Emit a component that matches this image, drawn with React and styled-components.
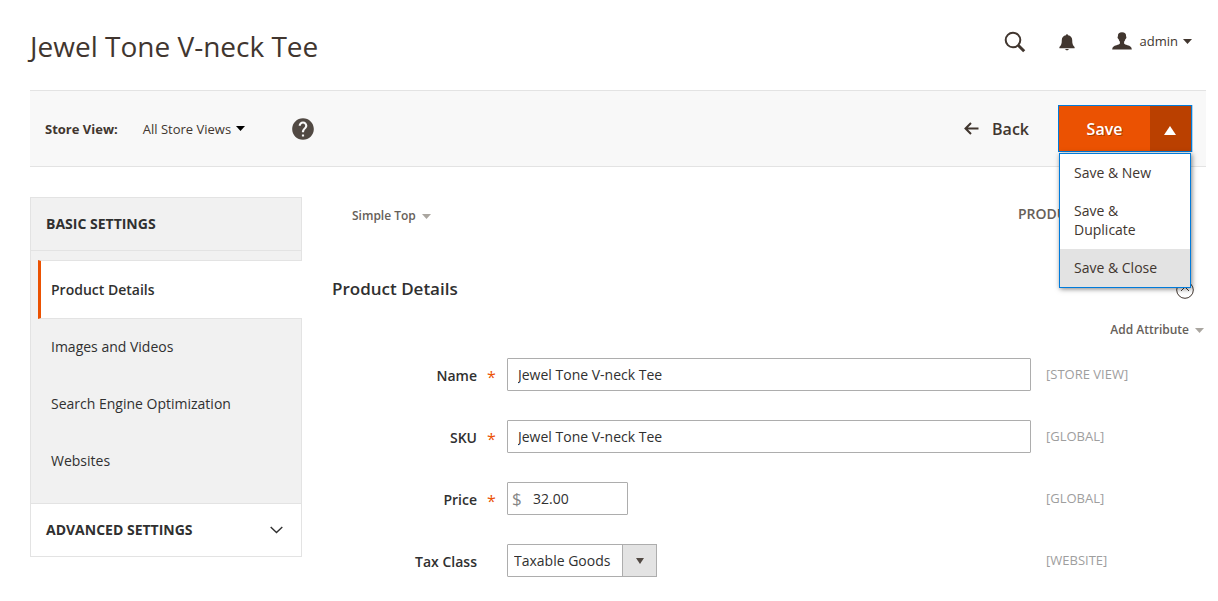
import React, { useState } from "react";
import styled, { createGlobalStyle, css } from "styled-components";
import { MdHelp } from "react-icons/md";

const GlobalStyle = createGlobalStyle`
  *, *::before, *::after { box-sizing: border-box; }
  body {
    margin: 0;
    background: #fff;
    color: #303030;
    font: 400 14px/20px "Open Sans", "Noto Sans", sans-serif;
  }
  button, input, select { font: inherit; color: inherit; }
  h1, h2, p, ul { margin: 0; padding: 0; }
  ul { list-style: none; }
`;

const Page = styled.div`
  padding: 0 12px 24px 30px;
`;

const Header = styled.header`
  display: flex;
  justify-content: space-between;
  align-items: flex-start;
  padding: 29px 14px 27px 0;
`;

const PageTitle = styled.h1`
  color: #41362f;
  font-size: 28px;
  line-height: 34px;
  font-weight: 400;
`;

const HeaderTools = styled.div`
  display: flex;
  align-items: center;
  height: 26px;
  color: #41362f;
`;

const PlainButton = styled.button`
  display: inline-flex;
  align-items: center;
  padding: 0;
  border: 0;
  background: none;
  cursor: pointer;
`;

const SearchButton = styled(PlainButton)`
  margin-right: 33px;
`;

const BellButton = styled(PlainButton)`
  margin-right: 37px;
`;

const AccountButton = styled(PlainButton)`
  padding-bottom: 2px;
  font-size: 13px;
  line-height: 24px;
`;

const AccountName = styled.span`
  margin: 0 5px 0 8px;
`;

const Toolbar = styled.div`
  display: flex;
  align-items: center;
  justify-content: space-between;
  padding: 14px 14px 14px 15px;
  margin-bottom: 30px;
  background: #f8f8f8;
  border-top: 1px solid #e3e3e3;
  border-bottom: 1px solid #e3e3e3;
`;

const StoreSwitcher = styled.div`
  display: flex;
  align-items: center;
  color: #41362f;
`;

const StoreLabel = styled.span`
  margin-right: 25px;
  font-size: 13px;
  font-weight: 700;
`;

const StoreButton = styled(PlainButton)`
  gap: 5px;
  margin-right: 45px;
  font-size: 13px;
  color: #41362f;
`;

const StoreArrow = styled.span`
  display: inline-flex;
  color: #000;
`;

const HelpLink = styled.a`
  display: flex;
  color: #514943;
`;

const Actions = styled.div`
  display: flex;
  align-items: center;
`;

const BackButton = styled(PlainButton)`
  gap: 13px;
  margin-right: 29px;
  color: #41362f;
  font-size: 16px;
  font-weight: 600;
`;

const SaveGroup = styled.div`
  position: relative;
  display: flex;
  width: 134px;
  height: 47px;
  border: 1px solid #007bdb;
  box-shadow: 1px 0 0 rgba(0, 123, 219, 0.3);
`;

const SaveButton = styled.button`
  flex: 1;
  padding: 0;
  border: 0;
  background: #eb5202;
  color: #fff;
  font-size: 16px;
  font-weight: 600;
  text-shadow: 1px 1px 0 rgba(0, 0, 0, 0.3);
  cursor: pointer;
`;

const SaveToggle = styled.button`
  display: flex;
  align-items: center;
  justify-content: center;
  width: 41px;
  padding: 3px 1px 0 0;
  border: 0;
  background: #ba4000;
  color: #fff;
  cursor: pointer;
`;

const SaveMenu = styled.ul`
  position: absolute;
  z-index: 2;
  top: 100%;
  left: 0;
  right: 0;
  margin-top: 2px;
  background: #fff;
  border: 1px solid #007bdb;
  box-shadow: 1px 1px 5px rgba(0, 0, 0, 0.5);
`;

const SaveMenuItem = styled.button`
  display: block;
  width: 100%;
  padding: 9px 14px 10px;
  border: 0;
  background: ${(p) => (p.$active ? "#e3e3e3" : "#fff")};
  color: #41362f;
  line-height: 19px;
  text-align: left;
  cursor: pointer;
`;

const Columns = styled.div`
  display: grid;
  grid-template-columns: 272px minmax(0, 1fr);
  column-gap: 30px;
  align-items: start;
`;

const Sidebar = styled.nav`
  background: #f1f1f1;
  border: 1px solid #e3e3e3;
`;

const GroupTitle = styled.h2`
  padding: 16px 15px;
  border-bottom: 1px solid #e3e3e3;
  font-size: 14px;
  line-height: 20px;
  font-weight: 700;
  text-transform: uppercase;
`;

const TabList = styled.ul`
  padding: 9px 0 13px 7px;
`;

const Tab = styled.a`
  display: block;
  padding: 18px 13px 19px;
  color: #303030;
  text-decoration: none;
  ${(p) =>
    p.$active &&
    css`
      margin-right: -1px;
      padding: 19px 10px 18px;
      background: #fff;
      border: 1px solid #e3e3e3;
      border-left: 3px solid #eb5202;
      border-right: 0;
      font-weight: 600;
    `}
`;

const GroupToggle = styled.button`
  display: flex;
  align-items: center;
  justify-content: space-between;
  width: 100%;
  padding: 16px 18px 16px 15px;
  border: 0;
  border-top: 1px solid #e3e3e3;
  background: #fff;
  font-weight: 700;
  text-transform: uppercase;
  cursor: pointer;
`;

const MetaRow = styled.div`
  display: flex;
  align-items: flex-start;
  justify-content: space-between;
  padding: 8px 66px 0 20px;
`;

const MutedButton = styled(PlainButton)`
  gap: 6px;
  color: #666059;
  font-size: 12px;
  line-height: 22px;
  font-weight: 600;
`;

const MutedArrow = styled.span`
  display: inline-flex;
  color: #aaa6a0;
`;

const OnlineStatus = styled.span`
  width: 122px;
  color: #666059;
  font-weight: 600;
  line-height: 18px;
  white-space: nowrap;
  text-transform: uppercase;
`;

const SectionHeader = styled.div`
  display: flex;
  align-items: center;
  justify-content: space-between;
  margin-top: 50px;
  padding-right: 12px;
`;

const SectionTitle = styled.h2`
  font-size: 17px;
  line-height: 24px;
  font-weight: 600;
`;

const CollapseButton = styled(PlainButton)`
  padding-top: 2px;
`;

const SectionTools = styled.div`
  display: flex;
  justify-content: flex-end;
  margin: 18px 2px 17px 0;
`;

const Form = styled.form`
  display: grid;
  row-gap: 29px;
`;

const Field = styled.div`
  display: grid;
  grid-template-columns: 145px 30px minmax(0, 1fr) 175px;
  align-items: center;
`;

const FieldLabel = styled.label`
  padding-top: 2px;
  font-weight: 600;
  text-align: right;
`;

const Required = styled.span`
  padding: 4px 0 0 10px;
  color: #eb5202;
  font-size: 16px;
  line-height: 20px;
`;

const Scope = styled.span`
  padding-left: 15px;
  margin-bottom: 2px;
  color: #9e9e9e;
  font-size: 13px;
`;

const boxed = css`
  height: 33px;
  border: 1px solid #adadad;
  border-radius: 1px;
  background: #fff;
`;

const TextInput = styled.input`
  ${boxed}
  width: 100%;
  padding: 0 10px;
`;

const PriceBox = styled.div`
  ${boxed}
  display: flex;
  align-items: center;
  width: 121px;
  padding-left: 4px;
`;

const Currency = styled.span`
  width: 21px;
  color: #858585;
  font-size: 17px;
`;

const PriceInput = styled.input`
  flex: 1;
  min-width: 0;
  padding: 0;
  border: 0;
  outline: 0;
  background: none;
`;

const SelectBox = styled.div`
  position: relative;
  width: 150px;
`;

const Select = styled.select`
  ${boxed}
  display: block;
  width: 100%;
  padding: 0 36px 0 6px;
  appearance: none;
`;

const SelectArrow = styled.span`
  position: absolute;
  top: 0;
  right: 0;
  bottom: 0;
  display: flex;
  align-items: center;
  justify-content: center;
  width: 35px;
  border: 1px solid #adadad;
  background: #e3e3e3;
  color: #514943;
  pointer-events: none;
`;

function Triangle({ width = 9, height = 5, up = false }) {
  const points = up
    ? `0,${height} ${width / 2},0 ${width},${height}`
    : `0,0 ${width},0 ${width / 2},${height}`;
  return (
    <svg width={width} height={height} viewBox={`0 0 ${width} ${height}`} aria-hidden="true">
      <polygon points={points} fill="currentColor" />
    </svg>
  );
}

function SearchIcon() {
  return (
    <svg width="22" height="22" viewBox="0 0 22 22" fill="none" stroke="#41362f" aria-hidden="true">
      <circle cx="9" cy="9" r="7.3" strokeWidth="2" />
      <path d="M14.2 14.2 20.2 20.2" strokeWidth="3" />
    </svg>
  );
}

function BellIcon() {
  return (
    <svg width="16" height="18" viewBox="0 0 16 18" fill="#41362f" aria-hidden="true">
      <path d="M7 2.2C7 1 9 1 9 2.200c2.700.5 4.200 2.300 4.200 4.800 0 3.800.6 5.200 2.400 7v1.200H.4V14c1.800-1.800 2.400-3.200 2.400-7C2.800 4.500 4.300 2.700 7 2.200Z" />
      <path d="M6.200 16h3.600c-.3 1.800-3.300 1.800-3.600 0Z" />
    </svg>
  );
}

function UserIcon() {
  return (
    <svg width="20" height="18" viewBox="0 0 20 18" fill="#41362f" aria-hidden="true">
      <path d="M10 .3C7.300.3 5.700 1.800 5.900 4.400c-.4.1-.4.700-.2 1.500.2.700.5 1.100.9 1.100.2 1.200.6 2 1.300 2.700v1.900c-.4.700-1.600 1.200-3.400 1.700C1.800 14 .3 14.900.2 17.600h19.600c-.1-2.700-1.600-3.600-4.300-4.300-1.800-.5-3-1-3.400-1.700V9.700c.7-.7 1.100-1.500 1.300-2.700.4 0 .7-.4.900-1.100.2-.8.2-1.400-.2-1.500.2-2.600-1.400-4.100-4.100-4.100Z" />
    </svg>
  );
}

function BackArrow() {
  return (
    <svg width="15" height="13" viewBox="0 0 15 13" fill="none" stroke="currentColor" strokeWidth="2" aria-hidden="true">
      <path d="M14.500 6.500H1.500M7 1 1.500 6.500 7 12" />
    </svg>
  );
}

function ChevronDown() {
  return (
    <svg width="13" height="8" viewBox="0 0 13 8" fill="none" stroke="currentColor" strokeWidth="1.400" aria-hidden="true">
      <path d="M.7 1 6.500 6.600 12.300 1" />
    </svg>
  );
}

function CollapseIcon() {
  return (
    <svg width="18" height="18" viewBox="0 0 18 18" fill="none" stroke="#41362f" aria-hidden="true">
      <circle cx="9" cy="9" r="8.300" />
      <path d="M5 10 9 6 13 10" />
    </svg>
  );
}

const tabs = ["Product Details", "Images and Videos", "Search Engine Optimization", "Websites"];
const saveOptions = ["Save & New", "Save & Duplicate", "Save & Close"];

function FormField({ id, label, scope, required, children }) {
  return (
    <Field>
      <FieldLabel htmlFor={id}>{label}</FieldLabel>
      <Required aria-hidden="true">{required ? "*" : ""}</Required>
      {children}
      <Scope>[{scope}]</Scope>
    </Field>
  );
}

export default function App() {
  const [menuOpen, setMenuOpen] = useState(true);
  return (
    <>
      <GlobalStyle />
      <Page>
        <Header>
          <PageTitle>Jewel Tone V-neck Tee</PageTitle>
          <HeaderTools>
            <SearchButton aria-label="Search"><SearchIcon /></SearchButton>
            <BellButton aria-label="Notifications"><BellIcon /></BellButton>
            <AccountButton>
              <UserIcon />
              <AccountName>admin</AccountName>
              <Triangle />
            </AccountButton>
          </HeaderTools>
        </Header>

        <Toolbar>
          <StoreSwitcher>
            <StoreLabel>Store View:</StoreLabel>
            <StoreButton>
              All Store Views
              <StoreArrow><Triangle /></StoreArrow>
            </StoreButton>
            <HelpLink href="#help" aria-label="Help"><MdHelp size={26} /></HelpLink>
          </StoreSwitcher>
          <Actions>
            <BackButton><BackArrow />Back</BackButton>
            <SaveGroup>
              <SaveButton>Save</SaveButton>
              <SaveToggle
                aria-label="More save options"
                aria-expanded={menuOpen}
                onClick={() => setMenuOpen(!menuOpen)}
              >
                <Triangle width={12} height={9} up />
              </SaveToggle>
              {menuOpen && (
                <SaveMenu>
                  {saveOptions.map((option) => (
                    <li key={option}>
                      <SaveMenuItem $active={option === "Save & Close"}>{option}</SaveMenuItem>
                    </li>
                  ))}
                </SaveMenu>
              )}
            </SaveGroup>
          </Actions>
        </Toolbar>

        <Columns>
          <Sidebar>
            <GroupTitle>Basic Settings</GroupTitle>
            <TabList>
              {tabs.map((tab, i) => (
                <li key={tab}>
                  <Tab href="#tab" $active={i === 0}>{tab}</Tab>
                </li>
              ))}
            </TabList>
            <GroupToggle>
              Advanced Settings
              <ChevronDown />
            </GroupToggle>
          </Sidebar>

          <main>
            <MetaRow>
              <MutedButton>Simple Top<MutedArrow><Triangle /></MutedArrow></MutedButton>
              <OnlineStatus>Product</OnlineStatus>
            </MetaRow>
            <SectionHeader>
              <SectionTitle>Product Details</SectionTitle>
              <CollapseButton aria-label="Collapse section"><CollapseIcon /></CollapseButton>
            </SectionHeader>
            <SectionTools>
              <MutedButton>Add Attribute<MutedArrow><Triangle /></MutedArrow></MutedButton>
            </SectionTools>
            <Form>
              <FormField id="name" label="Name" scope="STORE VIEW" required>
                <TextInput id="name" defaultValue="Jewel Tone V-neck Tee" />
              </FormField>
              <FormField id="sku" label="SKU" scope="GLOBAL" required>
                <TextInput id="sku" defaultValue="Jewel Tone V-neck Tee" />
              </FormField>
              <FormField id="price" label="Price" scope="GLOBAL" required>
                <PriceBox>
                  <Currency>$</Currency>
                  <PriceInput id="price" defaultValue="32.00" />
                </PriceBox>
              </FormField>
              <FormField id="tax" label="Tax Class" scope="WEBSITE">
                <SelectBox>
                  <Select id="tax" defaultValue="goods">
                    <option value="goods">Taxable Goods</option>
                  </Select>
                  <SelectArrow><Triangle width={8} height={6} /></SelectArrow>
                </SelectBox>
              </FormField>
            </Form>
          </main>
        </Columns>
      </Page>
    </>
  );
}
